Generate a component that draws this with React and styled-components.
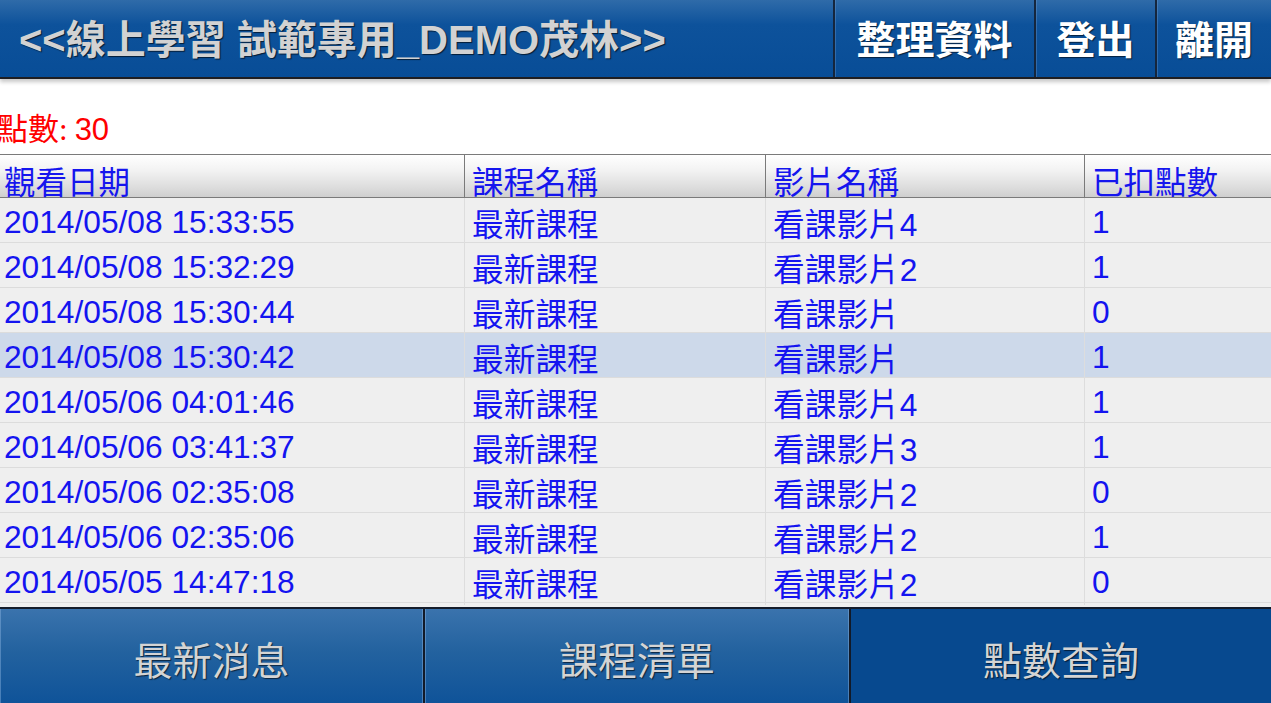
import React from "react";
import styled, { createGlobalStyle } from "styled-components";

const Global = createGlobalStyle`
  html, body { margin: 0; padding: 0; background: #ffffff; overflow: hidden; }
  #root { height: 703px; }
`;

const SANS = `"Liberation Sans", "Noto Sans CJK TC", sans-serif`;
const SERIF = `"Liberation Serif", "Noto Sans CJK TC", serif`;

const Page = styled.div`
  display: flex;
  flex-direction: column;
  height: 703px;
  width: 1271px;
  overflow: hidden;
`;

const Header = styled.header`
  position: relative;
  z-index: 2;
  display: flex;
  height: 77px;
  flex: 0 0 auto;
  background: linear-gradient(#2f6ba9 0%, #0d529b 32%, #084d97 100%);
  border-bottom: 2px solid #1e1e22;
  box-shadow: 0 3px 4px rgba(0, 0, 0, 0.22);
`;

const Title = styled.h1`
  flex: 1;
  margin: 0;
  padding-left: 19px;
  display: flex;
  align-items: center;
  font-family: ${SANS};
  font-weight: bold;
  font-size: 40px;
  color: #d2d2d2;
  text-shadow: 1px 1px 1px rgba(0, 0, 0, 0.65);
  white-space: nowrap;
  padding-bottom: 3px;
`;

const HeadButton = styled.div`
  display: flex;
  align-items: center;
  justify-content: center;
  width: ${(p) => p.$w}px;
  border-left: 2px solid #15263d;
  box-shadow: inset 1px 0 0 rgba(120, 160, 210, 0.35);
  font-family: ${SANS};
  font-weight: bold;
  font-size: 39px;
  color: #ffffff;
  text-shadow: 1px 1px 1px rgba(0, 0, 0, 0.6);
  padding-bottom: 3px;
  box-sizing: border-box;
`;

const PointsBar = styled.div`
  height: 75px;
  flex: 0 0 auto;
  display: flex;
  align-items: flex-end;
  padding-bottom: 6px;
  box-sizing: border-box;
  color: #ff0000;
  font-size: 31px;
  line-height: 36px;
`;

const PointsLabel = styled.span`
  font-family: ${SERIF};
  margin-left: -3px;
  margin-right: 7px;
`;

const PointsValue = styled.span`
  font-family: ${SANS};
`;

const Table = styled.div`
  flex: 1;
  min-height: 0;
  overflow: hidden;
  background: #efefef;
  border-top: 1px solid #7a7a7a;
`;

const COLS = "464px 301px 319px 1fr";

const HeadRow = styled.div`
  display: grid;
  grid-template-columns: ${COLS};
  height: 42px;
  background: linear-gradient(#ffffff 0%, #f3f3f3 35%, #dedede 75%, #cfcfcf 100%);
  border-bottom: 1px solid #7a7a7a;
`;

const HeadCell = styled.div`
  display: flex;
  align-items: center;
  padding-left: ${(p) => (p.$first ? 4 : 7)}px;
  border-left: ${(p) => (p.$first ? "none" : "1px solid #7a7a7a")};
  font-family: ${SERIF};
  font-size: 31.5px;
  color: #1515ee;
  white-space: nowrap;
  padding-top: 2px;
`;

const Row = styled.div`
  display: grid;
  grid-template-columns: ${COLS};
  height: 45px;
  box-sizing: border-box;
  border-bottom: 1px solid #dcdcdc;
  background: ${(p) => (p.$active ? "#cdd9ea" : "#efefef")};
`;

const Cell = styled.div`
  display: flex;
  align-items: center;
  padding-left: ${(p) => (p.$first ? 4 : 7)}px;
  border-left: ${(p) => (p.$first ? "none" : "1px solid #dddddd")};
  font-family: ${SANS};
  font-size: 31.7px;
  color: #1414f0;
  white-space: nowrap;
  padding-top: 1px;
`;

const Nav = styled.nav`
  flex: 0 0 auto;
  display: grid;
  grid-template-columns: 423px 424px 1fr;
  gap: 2px;
  height: 94px;
  background: #121a28;
  border-top: 2px solid #141c2a;
`;

const NavButton = styled.div`
  display: flex;
  align-items: center;
  justify-content: center;
  background: ${(p) =>
    p.$active
      ? "#07498f"
      : "linear-gradient(#3a73ad 0%, #23629f 45%, #0f5399 100%)"};
  box-shadow: ${(p) =>
    p.$active
      ? "none"
      : "inset 1px 0 0 rgba(140, 180, 225, 0.45), inset -1px 0 0 rgba(140, 180, 225, 0.45)"};
  font-family: ${SANS};
  font-size: 39px;
  color: #d4d4d4;
  text-shadow: 1px 1px 1px rgba(0, 0, 0, 0.6);
  padding-top: 4px;
  box-sizing: border-box;
`;

const rows = [
  ["2014/05/08 15:33:55", "最新課程", "看課影片4", "1"],
  ["2014/05/08 15:32:29", "最新課程", "看課影片2", "1"],
  ["2014/05/08 15:30:44", "最新課程", "看課影片", "0"],
  ["2014/05/08 15:30:42", "最新課程", "看課影片", "1"],
  ["2014/05/06 04:01:46", "最新課程", "看課影片4", "1"],
  ["2014/05/06 03:41:37", "最新課程", "看課影片3", "1"],
  ["2014/05/06 02:35:08", "最新課程", "看課影片2", "0"],
  ["2014/05/06 02:35:06", "最新課程", "看課影片2", "1"],
  ["2014/05/05 14:47:18", "最新課程", "看課影片2", "0"],
];

export default function App() {
  return (
    <>
      <Global />
      <Page>
        <Header>
          <Title>&lt;&lt;線上學習 試範專用_DEMO茂林&gt;&gt;</Title>
          <HeadButton $w={201}>整理資料</HeadButton>
          <HeadButton $w={121}>登出</HeadButton>
          <HeadButton $w={116}>離開</HeadButton>
        </Header>
        <PointsBar>
          <PointsLabel>點數:</PointsLabel>
          <PointsValue>30</PointsValue>
        </PointsBar>
        <Table>
          <HeadRow>
            <HeadCell $first>觀看日期</HeadCell>
            <HeadCell>課程名稱</HeadCell>
            <HeadCell>影片名稱</HeadCell>
            <HeadCell>已扣點數</HeadCell>
          </HeadRow>
          {rows.map((r, i) => (
            <Row key={i} $active={i === 3}>
              {r.map((c, j) => (
                <Cell key={j} $first={j === 0}>
                  {c}
                </Cell>
              ))}
            </Row>
          ))}
        </Table>
        <Nav>
          <NavButton>最新消息</NavButton>
          <NavButton>課程清單</NavButton>
          <NavButton $active>點數查詢</NavButton>
        </Nav>
      </Page>
    </>
  );
}
